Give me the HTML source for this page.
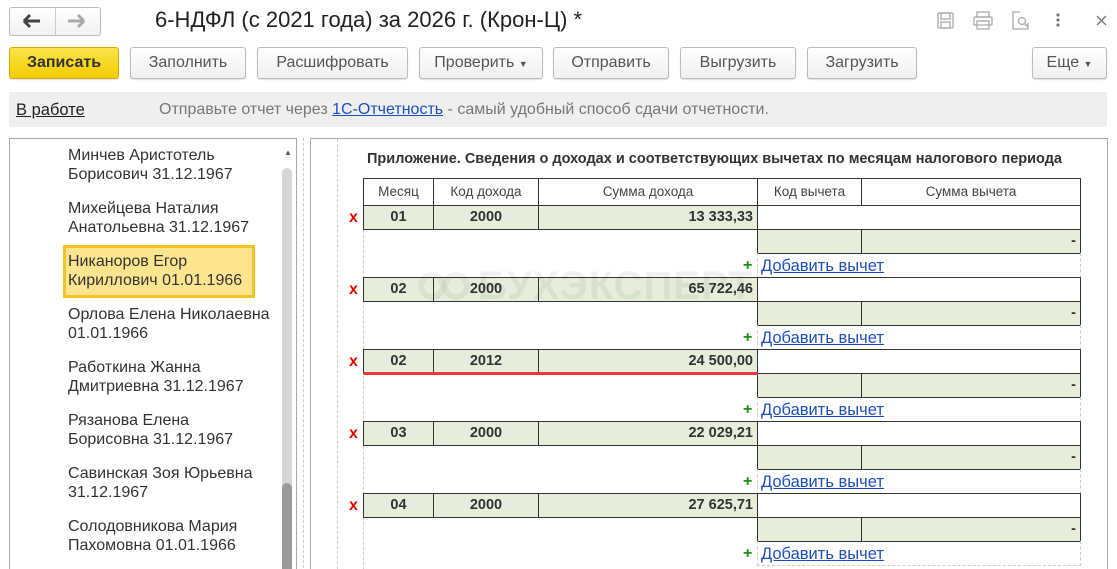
<!DOCTYPE html>
<html><head><meta charset="utf-8"><style>
*{box-sizing:border-box;margin:0;padding:0}
html,body{width:1117px;height:569px;overflow:hidden}
body{background:#fff;font-family:"Liberation Sans",Arial,sans-serif;position:relative;color:#333}
.a{position:absolute}
.btn{position:absolute;top:47px;height:32px;border:1px solid #bcbcbc;border-radius:3px;background:linear-gradient(#fff,#f0f0f0);font-size:16px;color:#555;text-align:center;line-height:30px;box-shadow:0 1px 1px rgba(0,0,0,.12)}
.nm{position:absolute;left:68px;font-size:16px;line-height:19px;color:#333}
.c{position:absolute;border:1px solid #333;height:25px;font-size:14.5px;font-weight:bold;line-height:23px;text-align:center;color:#333}
.g{background:#e6eedb}
.h{position:absolute;border:1px solid #333;height:28px;font-size:13.5px;line-height:26px;text-align:center;color:#444}
.x{position:absolute;left:349px;color:#e00;font-weight:bold;font-size:16px;line-height:16px}
.lk{position:absolute;left:761px;color:#1a4fbf;text-decoration:underline;font-size:16.5px;line-height:18px}
.pl{position:absolute;left:743px;color:#1a8f1a;font-weight:bold;font-size:16px;line-height:16px}
.dsh{position:absolute;left:757px;width:324px;height:25px;border:1px dashed #ccc;border-top:none}
</style></head><body>
<div class="a" style="left:9px;top:7px;width:92px;height:29px;border:1px solid #bbb;border-radius:3px;background:linear-gradient(#fff,#f1f1f1)"></div>
<div class="a" style="left:55px;top:8px;width:1px;height:27px;background:#ccc"></div>
<svg class="a" style="left:22px;top:13px" width="20" height="16"><path d="M2 8h16M2 8l6-6M2 8l6 6" stroke="#444" stroke-width="3" fill="none"/></svg>
<svg class="a" style="left:66px;top:13px" width="20" height="16"><path d="M2 8h15M18 8l-6-6M18 8l-6 6" stroke="#aaa" stroke-width="3" fill="none"/></svg>
<div class="a" style="left:155px;top:7px;font-size:22px;color:#222;line-height:26px">6-НДФЛ (с 2021 года) за 2026 г. (Крон-Ц) *</div>
<svg class="a" style="left:930px;top:8px" width="180" height="26" viewBox="0 0 180 26">
<g fill="none" stroke="#aaa" stroke-width="1.3">
<rect x="8" y="5" width="15" height="15" rx="1"/><rect x="11" y="5" width="9" height="6"/><rect x="11" y="14" width="9" height="6"/>
<rect x="47" y="4" width="12" height="5"/><rect x="44" y="9" width="18" height="8" rx="1"/><rect x="47" y="13" width="12" height="8"/>
<path d="M90 4h-7v17h15v-6"/><circle cx="92" cy="13" r="3.5"/><path d="M94.5 15.5l3 3"/>
<path d="M167 8l9 9M176 8l-9 9" stroke="#777"/>
</g>
<circle cx="128" cy="7" r="1.6" fill="#777"/><circle cx="128" cy="12" r="1.6" fill="#777"/><circle cx="128" cy="17" r="1.6" fill="#777"/>
</svg>
<div class="btn" style="left:9px;width:110px;background:linear-gradient(#fbe34a,#f2cd00);border-color:#d0ad00;font-weight:bold;color:#333">Записать</div>
<div class="btn" style="left:130px;width:116px">Заполнить</div>
<div class="btn" style="left:257px;width:151px">Расшифровать</div>
<div class="btn" style="left:419px;width:124px">Проверить <span style="font-size:9px">▼</span></div>
<div class="btn" style="left:553px;width:116px">Отправить</div>
<div class="btn" style="left:680px;width:116px">Выгрузить</div>
<div class="btn" style="left:807px;width:110px">Загрузить</div>
<div class="btn" style="left:1032px;width:75px">Еще <span style="font-size:9px">▼</span></div>
<div class="a" style="left:9px;top:92px;width:1098px;height:35px;background:#efefef"></div>
<div class="a" style="left:16px;top:100px;font-size:16.5px;color:#222;text-decoration:underline;line-height:20px">В работе</div>
<div class="a" style="left:159px;top:100px;font-size:16px;color:#777;line-height:20px">Отправьте отчет через <span style="color:#1a4fbf;text-decoration:underline">1С-Отчетность</span> - самый удобный способ сдачи отчетности.</div>
<div class="a" style="left:9px;top:138px;width:288px;height:440px;border:1px solid #aaa"></div>
<div class="a" style="left:282px;top:168px;width:10px;height:410px;background:#d6d6d6;border-radius:5px"></div>
<div class="a" style="left:282px;top:483px;width:10px;height:100px;background:#9a9a9a;border-radius:5px"></div>
<div class="a" style="left:284px;top:148px;font-size:8px;color:#555">▲</div>
<div class="a" style="left:303px;top:138px;height:440px;border-left:1px dashed #ccc"></div>
<div class="a" style="left:63px;top:245px;width:192px;height:53px;background:#fce58e;border:3px solid #f4c522"></div>
<div class="nm" style="top:146px">Минчев Аристотель<br>Борисович 31.12.1967</div>
<div class="nm" style="top:199px">Михейцева Наталия<br>Анатольевна 31.12.1967</div>
<div class="nm" style="top:252px">Никаноров Егор<br>Кириллович 01.01.1966</div>
<div class="nm" style="top:305px">Орлова Елена Николаевна<br>01.01.1966</div>
<div class="nm" style="top:358px">Работкина Жанна<br>Дмитриевна 31.12.1967</div>
<div class="nm" style="top:411px">Рязанова Елена<br>Борисовна 31.12.1967</div>
<div class="nm" style="top:464px">Савинская Зоя Юрьевна<br>31.12.1967</div>
<div class="nm" style="top:517px">Солодовникова Мария<br>Пахомовна 01.01.1966</div>
<div class="a" style="left:310px;top:138px;width:798px;height:440px;border:1px solid #aaa"></div>
<div class="a" style="left:337px;top:139px;height:440px;border-left:1px dashed #ccc"></div>
<div class="a" style="left:363px;top:205px;height:370px;border-left:1px dashed #ccc"></div>
<div class="a" style="left:367px;top:150px;font-size:14.5px;font-weight:bold;color:#333;line-height:18px">Приложение. Сведения о доходах и соответствующих вычетах по месяцам налогового периода</div>
<div class="h" style="left:363px;top:178px;width:71px">Месяц</div>
<div class="h" style="left:433px;top:178px;width:106px">Код дохода</div>
<div class="h" style="left:538px;top:178px;width:220px">Сумма дохода</div>
<div class="h" style="left:757px;top:178px;width:105px">Код вычета</div>
<div class="h" style="left:861px;top:178px;width:220px">Сумма вычета</div>

<div class="x" style="top:210px">x</div>
<div class="c g" style="left:363px;top:205px;width:71px">01</div>
<div class="c g" style="left:433px;top:205px;width:106px">2000</div>
<div class="c g" style="left:538px;top:205px;width:220px;text-align:right;padding-right:4px">13 333,33</div>
<div class="c" style="left:757px;top:205px;width:324px"></div>
<div class="c g" style="left:757px;top:229px;width:105px"></div>
<div class="c g" style="left:861px;top:229px;width:220px;text-align:right;padding-right:4px">-</div>
<div class="dsh" style="top:253px"></div>
<div class="pl" style="top:258px">+</div><div class="lk" style="top:257px">Добавить вычет</div>

<div class="x" style="top:282px">x</div>
<div class="c g" style="left:363px;top:277px;width:71px">02</div>
<div class="c g" style="left:433px;top:277px;width:106px">2000</div>
<div class="c g" style="left:538px;top:277px;width:220px;text-align:right;padding-right:4px">65 722,46</div>
<div class="c" style="left:757px;top:277px;width:324px"></div>
<div class="c g" style="left:757px;top:301px;width:105px"></div>
<div class="c g" style="left:861px;top:301px;width:220px;text-align:right;padding-right:4px">-</div>
<div class="dsh" style="top:325px"></div>
<div class="pl" style="top:330px">+</div><div class="lk" style="top:329px">Добавить вычет</div>

<div class="x" style="top:354px">x</div>
<div class="c g" style="left:363px;top:349px;width:71px">02</div>
<div class="c g" style="left:433px;top:349px;width:106px">2012</div>
<div class="c g" style="left:538px;top:349px;width:220px;text-align:right;padding-right:4px">24 500,00</div>
<div class="c" style="left:757px;top:349px;width:324px"></div>
<div class="c g" style="left:757px;top:373px;width:105px"></div>
<div class="c g" style="left:861px;top:373px;width:220px;text-align:right;padding-right:4px">-</div>
<div class="a" style="left:363px;top:372px;width:395px;height:3px;background:#f0353d;border-radius:2px"></div>
<div class="dsh" style="top:397px"></div>
<div class="pl" style="top:402px">+</div><div class="lk" style="top:401px">Добавить вычет</div>

<div class="x" style="top:426px">x</div>
<div class="c g" style="left:363px;top:421px;width:71px">03</div>
<div class="c g" style="left:433px;top:421px;width:106px">2000</div>
<div class="c g" style="left:538px;top:421px;width:220px;text-align:right;padding-right:4px">22 029,21</div>
<div class="c" style="left:757px;top:421px;width:324px"></div>
<div class="c g" style="left:757px;top:445px;width:105px"></div>
<div class="c g" style="left:861px;top:445px;width:220px;text-align:right;padding-right:4px">-</div>
<div class="dsh" style="top:469px"></div>
<div class="pl" style="top:474px">+</div><div class="lk" style="top:473px">Добавить вычет</div>

<div class="x" style="top:498px">x</div>
<div class="c g" style="left:363px;top:493px;width:71px">04</div>
<div class="c g" style="left:433px;top:493px;width:106px">2000</div>
<div class="c g" style="left:538px;top:493px;width:220px;text-align:right;padding-right:4px">27 625,71</div>
<div class="c" style="left:757px;top:493px;width:324px"></div>
<div class="c g" style="left:757px;top:517px;width:105px"></div>
<div class="c g" style="left:861px;top:517px;width:220px;text-align:right;padding-right:4px">-</div>
<div class="dsh" style="top:541px"></div>
<div class="pl" style="top:546px">+</div><div class="lk" style="top:545px">Добавить вычет</div>

<div class="a" style="left:478px;top:264px;font-size:40px;font-weight:bold;color:rgba(0,0,0,0.06);line-height:44px;letter-spacing:1px">БУХЭКСПЕРТ</div>
<div class="a" style="left:418px;top:272px;width:28px;height:28px;border:6px solid rgba(0,0,0,0.05);border-radius:50%"></div>
<div class="a" style="left:442px;top:272px;width:28px;height:28px;border:6px solid rgba(0,0,0,0.05);border-radius:50%"></div>
</body></html>
